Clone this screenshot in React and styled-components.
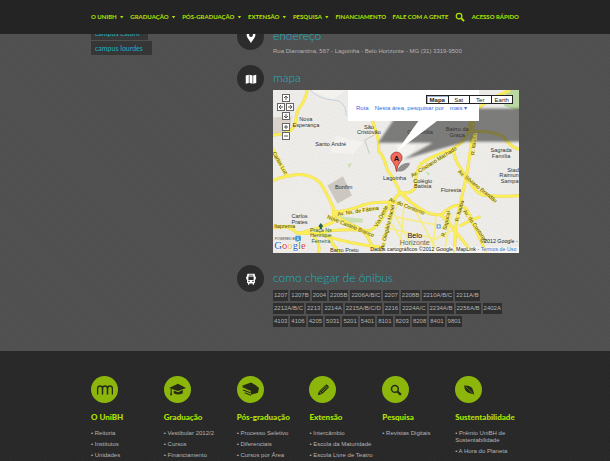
import React from "react";
import styled, { createGlobalStyle } from "styled-components";

const lime = "#b0e400";
const cyan = "#1fb0c4";

const GlobalStyle = createGlobalStyle`
  *, *::before, *::after { box-sizing: border-box; }
  html { scrollbar-width: none; background: #292929; }
  body { margin: 0; font-family: "Liberation Sans", Arial, sans-serif; font-size: 6px; line-height: 7px; color: #b4b4b4; }
  ul { list-style: none; margin: 0; padding: 0; }
  a { color: inherit; text-decoration: none; }
  button { font: inherit; cursor: pointer; }
`;

const Container = styled.div`
  width: calc(100% - 32px);
  max-width: 428px;
  margin: 0 auto;
`;

const Header = styled.header`
  position: fixed;
  top: 0;
  left: 0;
  right: 0;
  z-index: 10;
  background: #242424;
`;

const Nav = styled(Container).attrs({ as: "nav" })`
  display: flex;
  align-items: center;
  justify-content: space-between;
  height: 34px;
`;

const NavLink = styled.a`
  display: flex;
  align-items: center;
  gap: 3px;
  font: 700 6px/8px Lato, sans-serif;
  color: ${lime};
  white-space: nowrap;
  &::after {
    content: "";
    display: ${(p) => (p.$menu ? "block" : "none")};
    width: 4px;
    height: 3px;
    background: ${lime};
    clip-path: polygon(0 0, 100% 0, 50% 100%);
  }
`;

const SearchButton = styled.button`
  display: flex;
  padding: 0;
  border: 0;
  background: none;
  color: ${lime};
`;

const Main = styled.main`
  background:
    repeating-linear-gradient(45deg, rgba(0, 0, 0, 0.02) 0 1px, transparent 1px 3px),
    #515151;
  padding: 23px 0 24px;
`;

const Columns = styled(Container)`
  display: grid;
  grid-template-columns: 146px minmax(0, 1fr);
`;

const CampusList = styled.ul`
  display: flex;
  flex-direction: column;
  align-items: flex-start;
  gap: 1px;
  padding-top: 3px;
`;

const CampusLink = styled.a`
  display: block;
  padding: 0 9px 0 4px;
  background: #363636;
  font: 400 7px/14px Lato, sans-serif;
  color: ${cyan};
`;

const Sections = styled.div`
  display: flex;
  flex-direction: column;
  gap: 10px;
`;

const Section = styled.section`
  display: grid;
  grid-template-columns: 27px minmax(0, 1fr);
  column-gap: 9px;
  align-items: start;
`;

const Disc = styled.span`
  display: grid;
  place-items: center;
  width: 27px;
  height: 27px;
  border-radius: 50%;
  background: ${(p) => (p.$lime ? "#8db60d" : "#2c2c2c")};
  color: ${(p) => (p.$lime ? "#252b16" : "#fff")};
`;

const SectionTitle = styled.h2`
  margin: 0;
  font: 300 12px/25px Lato, sans-serif;
  color: ${cyan};
`;

const Address = styled.address`
  font-style: normal;
`;

const Routes = styled.ul`
  display: flex;
  flex-wrap: wrap;
  gap: 2px;
  max-width: 234px;
`;

const Route = styled.li`
  padding: 0 1px;
  background: #2f2f2f;
  line-height: 11px;
`;

const MapFrame = styled.div`
  position: relative;
  margin-bottom: 2px;
  overflow: hidden;
  svg { display: block; width: 100%; height: auto; }
`;

const InfoWindow = styled.div`
  position: absolute;
  top: 0;
  left: 75px;
  display: flex;
  gap: 6px;
  width: 131px;
  height: 31px;
  padding: 15px 8px 0;
  background: #fff;
  color: #3a6be0;
  white-space: nowrap;
`;

const MapTypes = styled.div`
  position: absolute;
  top: 5px;
  right: 6px;
  display: grid;
  grid-template-columns: repeat(4, 1fr);
  width: 86px;
`;

const MapType = styled.button`
  height: 9px;
  padding: 0;
  border: 1px solid #222;
  margin-left: -1px;
  background: #fff;
  color: #222;
  font-size: 6px;
  line-height: 6px;
  font-weight: ${(p) => (p.$active ? 700 : 400)};
  box-shadow: ${(p) => (p.$active ? "inset 1px 1px #9db6d8" : "none")};
`;

const PanPad = styled.div`
  position: absolute;
  top: 4px;
  left: 4px;
  display: flex;
  flex-direction: column;
  align-items: center;
  gap: 1px;
`;

const PadRow = styled.div`
  display: flex;
  gap: 1px;
  padding-bottom: ${(p) => (p.$last ? "2px" : "0")};
`;

const PadButton = styled.button`
  display: grid;
  place-items: center;
  width: 8px;
  height: 8px;
  padding: 0;
  border: 1px solid #666;
  background: #fff;
  color: #555;
  svg { width: 6px; height: 6px; }
`;

const Footer = styled.footer`
  padding: 25px 0 4px;
  background:
    repeating-linear-gradient(45deg, rgba(255, 255, 255, 0.01) 0 1px, transparent 1px 3px),
    #282828;
`;

const FooterGrid = styled(Container)`
  display: grid;
  grid-template-columns: repeat(6, minmax(0, 1fr));
  column-gap: 9px;
`;

const FooterTitle = styled.h3`
  margin: 9px 0 7px;
  font: 900 8px/11px Lato, sans-serif;
  color: ${lime};
  white-space: nowrap;
`;

const FooterLinks = styled.ul`
  display: flex;
  flex-direction: column;
  gap: 4px;
  line-height: 7px;
  li::before { content: "• "; }
`;

const Icon = ({ size = 16, children }) => (
  <svg width={size} height={size} viewBox="0 0 32 32" fill="none" aria-hidden="true">{children}</svg>
);

const icons = {
  pin: <path fill="currentColor" fillRule="evenodd" d="M16 2c-6 0-10 4-10 9 0 7 7 12 10 19 3-7 10-12 10-19 0-5-4-9-10-9zm0 5a4.500 4.500 0 1 1 0 9 4.500 4.500 0 0 1 0-9z" />,
  map: <path fill="currentColor" d="M4 8l7-2v19l-7 2zM12.500 6l7 2v19l-7-2zM21 8l7-2v19l-7 2z" />,
  bus: <path fill="currentColor" fillRule="evenodd" d="M9 4h14q2 0 2 3v3h2v7h-2v8h-2v4h-3v-3h-8v3H9v-4H7v-8H5v-7h2V7q0-3 2-3zm2 2v2h10V6zm-1 4v8h12v-8zm0 10v3h3v-3zm9 0v3h3v-3z" />,
  arches: (
    <path stroke="currentColor" strokeWidth="3" d="M1 25V14q0-6 5-6t5 6v11M11 14q0-6 5-6t5 6v11M21 14q0-6 5-6t5 6v11" />
  ),
  cap: (
    <>
      <path fill="currentColor" d="M0 13 17 5l15 8-15 6z" />
      <path fill="currentColor" d="M9 18l8 3 9-4v6q-9 5-17 0zM3 15h2v6l1 6H2l1-6z" />
    </>
  ),
  books: (
    <>
      <path fill="currentColor" d="M0 9 17 3l9 5 6 5-2 9-13 4-1-8z" />
      <path stroke="currentColor" strokeWidth="2" d="M1 11l14 6M2 17l14 5M5 22l12 5" />
    </>
  ),
  pencil: (
    <>
      <path fill="currentColor" d="M4 28l3-10L22 4q2-2 5 1t2 6L14 25z" />
      <path stroke="#8db60d" strokeWidth="1.500" d="M10 18 21 8M13 21 24 11M20 5l7 7M7 19l6 6" />
    </>
  ),
  search: (
    <>
      <circle cx="13" cy="13" r="9" stroke="currentColor" strokeWidth="4" />
      <path stroke="currentColor" strokeWidth="6" d="M20 20l9 9" />
    </>
  ),
  leaf: (
    <>
      <path fill="currentColor" d="M3 4q22 0 24 13l3 11-10-3Q4 22 3 4z" />
      <path stroke="#8db60d" strokeWidth="1.500" d="M7 7l19 18" />
    </>
  ),
};

const menu = [
  ["O UNIBH", true], ["GRADUAÇÃO", true], ["PÓS-GRADUAÇÃO", true], ["EXTENSÃO", true],
  ["PESQUISA", true], ["FINANCIAMENTO", false], ["FALE COM A GENTE", false],
];

const routes = (
  "1207 1207B 2004 2205B 2206A/B/C 2207 2208B 2210A/B/C 2211A/B " +
  "2212A/B/C 2213 2214A 2215A/B/C/D 2216 2224A/C 2234A/B 2256A/B 2402A " +
  "4103 4106 4205 5031 5201 5401 8101 8203 8208 8401 9801"
).split(" ");

const footerColumns = [
  ["O UniBH", "arches", 16, ["Reitoria", "Institutos", "Unidades"]],
  ["Graduação", "cap", 17, ["Vestibular 2012/2", "Cursos", "Financiamento"]],
  ["Pós-graduação", "books", 17, ["Processo Seletivo", "Diferenciais", "Cursos por Área"]],
  ["Extensão", "pencil", 14, ["Intercâmbio", "Escola da Maturidade", "Escola Livre de Teatro"]],
  ["Pesquisa", "search", 12, ["Revistas Digitais"]],
  ["Sustentabilidade", "leaf", 12, ["Prêmio UniBH de Sustentabilidade", "A Hora do Planeta"]],
];

const avenues = [
  "M112 12Q108 40 92 60Q78 80 77 110Q70 145 9 148",
  "M9 190Q40 250 52 272",
  "M9 285Q30 275 52 272Q110 255 150 290Q165 310 190 365L192 385",
  "M240 12Q300 60 315 125Q330 160 327 195Q345 215 352 250Q380 290 392 322",
  "M192 380Q240 375 275 360Q320 345 385 352",
  "M192 380Q210 402 250 420Q290 430 310 490",
  "M192 385L190 410Q160 425 100 440",
  "M9 428Q55 415 80 442Q140 448 190 435Q250 430 300 436Q330 420 345 385Q360 355 392 322",
  "M80 442Q150 445 175 452Q190 480 210 504",
  "M130 450Q155 480 145 504",
  "M170 452Q240 475 330 485",
  "M392 322Q435 325 438 300Q440 245 460 230Q500 205 550 190Q600 160 603 110Q620 50 720 15",
  "M552 190Q555 220 575 250Q615 320 640 328Q690 335 750 330",
  "M600 135L640 137Q700 140 712 165Q735 190 750 190",
  "M620 25L606 180L592 270L575 345L560 420L555 504",
  "M392 322Q420 350 450 368Q480 390 515 388Q550 355 575 360Q600 370 610 410L650 500",
  "M515 388Q540 410 560 440L600 490",
  "M575 420Q600 405 630 395",
];
const minorAvenues = [
  "M385 350L330 504", "M405 350L390 504", "M370 380L440 504", "M435 370L505 500",
  "M380 395L510 420", "M360 430L500 460", "M500 390L490 500", "M545 385L525 500",
  "M350 390L400 470", "M460 480L560 430", "M400 322L425 345", "M392 322L350 365",
];

const labels = [
  [108, 105, "Nova"], [108, 123, "Esperança"], [298, 129, "São"], [298, 145, "Cristóvão"],
  [183, 180, "Santo André"], [452, 146, "Concórdia"], [564, 136, "Bairro da"], [564, 153, "Graça"],
  [696, 200, "Sagrada"], [696, 217, "Família"], [375, 282, "Lagoinha"], [460, 292, "Colégio"],
  [460, 308, "Batista"], [545, 318, "Floresta"], [222, 311, "Bonfim"], [89, 399, "Carlos"],
  [89, 415, "Prates"], [732, 259, "Stad"], [720, 275, "Raimun"], [722, 291, "Sampa"], [224, 500, "Barro Preto"],
];
const roadLabels = [
  [265, 377, -9, "Av. Ns. de Fátima"], [243, 422, 22, "Nove Castelo Branco"],
  [493, 229, -32, "Av. Cristiano Machado"], [625, 302, 39, "Av. Silviano Brandão"],
  [614, 176, -84, "R. Itaúba"], [571, 376, -75, "R. Itaúba"], [412, 362, 22, "Av. do Contorno"],
  [618, 421, 55, "Av. do Contorno"], [530, 415, -78, "R. Sapucaí"], [335, 392, -62, "Via Oeste"],
  [354, 425, -76, "Av. Olegário Maciel"], [30, 232, 60, "Carlos Luz"], [44, 424, 0, "Itaprema"],
];

const CityMap = () => (
  <svg viewBox="0 0 741 492" role="img" aria-label="Mapa de Belo Horizonte">
    <defs>
      <pattern id="streets" width="17" height="13" patternUnits="userSpaceOnUse" patternTransform="rotate(18)">
        <rect width="17" height="13" fill="#edece8" />
        <path d="M0 0H17M0 0V13" stroke="#d8d6d0" strokeWidth="4" />
        <path d="M0 0H17M0 0V13" stroke="#fff" strokeWidth="2" />
      </pattern>
      <pattern id="streetsSteep" width="14" height="18" patternUnits="userSpaceOnUse" patternTransform="rotate(-32)">
        <rect width="14" height="18" fill="#edece8" />
        <path d="M0 0H14M0 0V18" stroke="#dad8d2" strokeWidth="4" />
        <path d="M0 0H14M0 0V18" stroke="#fff" strokeWidth="2" />
      </pattern>
      <filter id="soft"><feGaussianBlur stdDeviation="4" /></filter>
    </defs>
    <g transform="translate(-9 -12)" fontFamily="Liberation Sans, Arial, sans-serif" textAnchor="middle">
      <rect x="9" y="12" width="741" height="492" fill="url(#streets)" />
      <path d="M9 190L52 272Q110 255 150 290L192 380L80 442L9 428zM327 195L460 230L438 300L515 388L560 504H330L392 322zM603 110L750 190V330L640 328L552 190z" fill="url(#streetsSteep)" />
      <path d="M110 12L190 40L230 12zM380 170L440 180L420 220L390 230zM200 150L280 170L250 205L180 200z" fill="#f3f2ee" />
      <path d="M712 12H750V76L705 60z" fill="#b9d8a2" />
      <path d="M173 300L220 272L247 330L203 354z" fill="#cdc7c1" />
      <path d="M9 95L65 90L60 145L9 145z" fill="#d9d3cc" />
      <path d="M186 390L280 400L278 412L200 410zM468 258L482 262L478 270zM234 235L246 232L238 250z" fill="#c9e0b4" />
      <path d="M285 163L315 147M285 163L300 205" stroke="#a9bf9a" strokeWidth="2" />
      <path d="M120 12Q150 40 190 42T230 90" fill="none" stroke="#c4d1dd" strokeWidth="3" />
      <g fill="none" strokeLinecap="round">
        {minorAvenues.map((d) => <path key={d} d={d} stroke="#f8ec85" strokeWidth="5" />)}
        {avenues.map((d) => <path key={d} d={d} stroke="#e6d55a" strokeWidth="9" />)}
        {avenues.map((d) => <path key={d} d={d} stroke="#fcee58" strokeWidth="7" />)}
      </g>
      <path d="M395 68H760V168H590Q510 190 400 222L490 171H326z" fill="#333" opacity=".6" filter="url(#soft)" />
      <path d="M382 256Q390 236 410 232T415 245T382 256z" fill="#333" opacity=".5" />
      <g fontSize="17" fill="#333">
        {labels.map(([x, y, text]) => <text key={text} x={x} y={y}>{text}</text>)}
      </g>
      <g fontSize="16" fill="#4a4520" stroke="#fcee58" strokeWidth="2" paintOrder="stroke">
        {roadLabels.map(([x, y, angle, text]) => (
          <text key={`${text}${x}`} transform={`translate(${x} ${y}) rotate(${angle})`} y="5">{text}</text>
        ))}
      </g>
      <g fontSize="16" fill="#27604c">
        <text x="153" y="440">Praça Ns</text>
        <text x="153" y="456">Henrique</text>
        <text x="153" y="472">Ferreira</text>
        <path d="M153 413l7 9-4 5v4h-6v-4l-4-5z" />
      </g>
      <text x="436" y="457" fontSize="22" fill="#111">Belo</text>
      <text x="436" y="480" fontSize="21" fill="#666">Horizonte</text>
      <rect x="502" y="417" width="12" height="12" fill="#4c93d6" />
      <rect x="505" y="420" width="6" height="6" fill="#fff" />
      <path d="M448 104H505L381 198z" fill="#fff" />
      <path d="M381 258Q379 240 370 229A17 17 0 1 1 392 229Q383 240 381 258z" fill="#f4695c" stroke="#7d2a22" strokeWidth="2" />
      <text x="381" y="226" fontSize="23" fontWeight="700" fill="#111">A</text>
      <path d="M345 484H750V504H345z" fill="#fff" opacity=".45" />
      <g fontSize="16" fill="#222" textAnchor="end">
        <text x="746" y="473">©2012 Google -</text>
        <text x="742" y="498">
          Dados cartográficos ©2012 Google, MapLink - <tspan fill="#3770d8">Termos de Uso</tspan>
        </text>
      </g>
      <g textAnchor="start">
        <text x="14" y="464" fontSize="10" fill="#444">POWERED BY</text>
        <rect x="76" y="451" width="17" height="17" rx="4" fill="#3b97d3" />
        <path d="M84 454v7M80 465l4-4 4 4" stroke="#fff" strokeWidth="2" fill="none" />
        <text x="13" y="492" fontSize="32" fontFamily="Liberation Serif, serif" stroke="#fff" strokeWidth="3" paintOrder="stroke">
          <tspan fill="#2457c5">G</tspan><tspan fill="#d8322b">o</tspan><tspan fill="#e9b41c">o</tspan><tspan fill="#2457c5">g</tspan><tspan fill="#2d9c45">l</tspan><tspan fill="#d8322b">e</tspan>
        </text>
      </g>
    </g>
  </svg>
);

const padGlyphs = {
  Norte: "M3 5V1M1 3l2-2 2 2",
  Oeste: "M5 3H1M3 1L1 3l2 2",
  Leste: "M1 3h4M3 1l2 2-2 2",
  Sul: "M3 1v4M1 3l2 2 2-2",
  Ampliar: "M1 3h4M3 1v4",
  Reduzir: "M1 3h4",
};

const Pad = ({ name }) => (
  <PadButton type="button" aria-label={name}>
    <svg viewBox="0 0 6 6" fill="none" stroke="currentColor"><path d={padGlyphs[name]} /></svg>
  </PadButton>
);

const InfoSection = ({ icon, title, children }) => (
  <Section>
    <Disc><Icon size={14}>{icons[icon]}</Icon></Disc>
    <div>
      <SectionTitle>{title}</SectionTitle>
      {children}
    </div>
  </Section>
);

export default function App() {
  return (
    <>
      <GlobalStyle />
      <Header>
        <Nav>
          {menu.map(([text, hasMenu]) => (
            <NavLink key={text} href="#" $menu={hasMenu}>{text}</NavLink>
          ))}
          <SearchButton type="button" aria-label="Buscar"><Icon size={10}>{icons.search}</Icon></SearchButton>
          <NavLink href="#">ACESSO RÁPIDO</NavLink>
        </Nav>
      </Header>
      <Main>
        <Columns>
          <CampusList>
            <li><CampusLink href="#">campus estoril</CampusLink></li>
            <li><CampusLink href="#">campus lourdes</CampusLink></li>
          </CampusList>
          <Sections>
            <InfoSection icon="pin" title="endereço">
              <Address>Rua Diamantina, 567 - Lagoinha - Belo Horizonte - MG (31) 3319-9500</Address>
            </InfoSection>
            <InfoSection icon="map" title="mapa">
              <MapFrame>
                <CityMap />
                <InfoWindow>
                  <a href="#">Rota</a>
                  <a href="#">Nesta área, pesquisar por</a>
                  <a href="#">mais ▾</a>
                </InfoWindow>
                <MapTypes>
                  <MapType type="button" $active>Mapa</MapType>
                  <MapType type="button">Sat</MapType>
                  <MapType type="button">Ter</MapType>
                  <MapType type="button">Earth</MapType>
                </MapTypes>
                <PanPad>
                  <Pad name="Norte" />
                  <PadRow><Pad name="Oeste" /><Pad name="Leste" /></PadRow>
                  <PadRow $last><Pad name="Sul" /></PadRow>
                  <Pad name="Ampliar" />
                  <Pad name="Reduzir" />
                </PanPad>
              </MapFrame>
            </InfoSection>
            <InfoSection icon="bus" title="como chegar de ônibus">
              <Routes>{routes.map((r) => <Route key={r}>{r}</Route>)}</Routes>
            </InfoSection>
          </Sections>
        </Columns>
      </Main>
      <Footer>
        <FooterGrid>
          {footerColumns.map(([title, icon, size, links]) => (
            <div key={title}>
              <Disc $lime><Icon size={size}>{icons[icon]}</Icon></Disc>
              <FooterTitle>{title}</FooterTitle>
              <FooterLinks>
                {links.map((l) => <li key={l}><a href="#">{l}</a></li>)}
              </FooterLinks>
            </div>
          ))}
        </FooterGrid>
      </Footer>
    </>
  );
}
